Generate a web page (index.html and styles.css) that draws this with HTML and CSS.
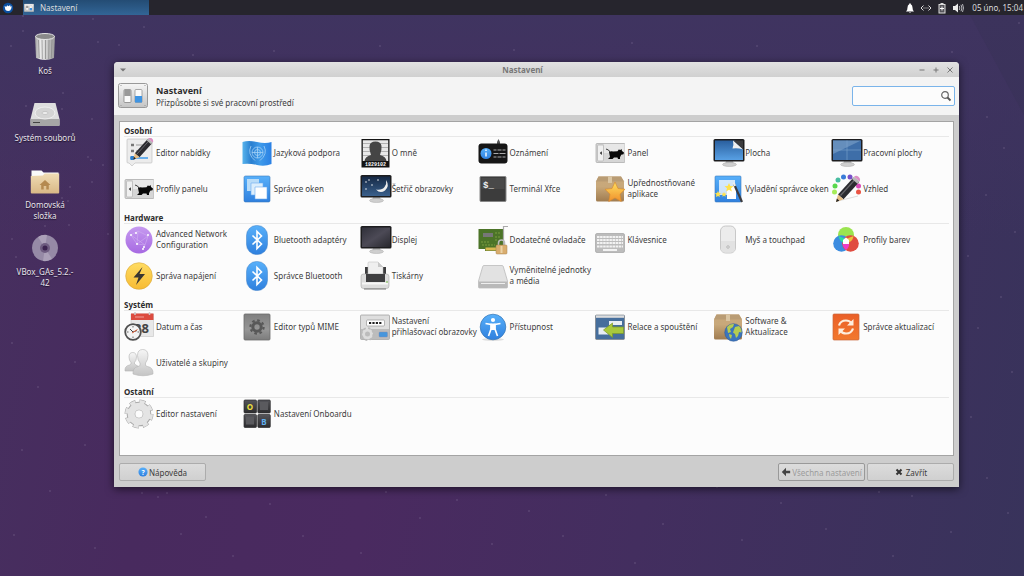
FILE: index.html
```
<!DOCTYPE html>
<html lang="cs">
<head>
    <meta charset="UTF-8">
    <meta name="viewport" content="width=device-width, initial-scale=1">
    <title>Nastavení</title>
    <link rel="stylesheet" href="styles.css">
</head>
<body>
    <!-- shared gradients and symbols -->
    <svg class="defs" width="0" height="0" aria-hidden="true">
        <defs>
            <linearGradient id="blue" x2="0" y2="1"><stop stop-color="#58b0fa"/><stop offset="1" stop-color="#2f80de"/></linearGradient>
            <linearGradient id="flag"><stop stop-color="#58b4ec"/><stop offset=".3" stop-color="#2a7fd0"/><stop offset=".6" stop-color="#3f9bea"/><stop offset="1" stop-color="#2a80e4"/></linearGradient>
            <linearGradient id="silver" x2="0" y2="1"><stop stop-color="#f6f6f6"/><stop offset="1" stop-color="#c4c4c4"/></linearGradient>
            <linearGradient id="metal"><stop stop-color="#a0a0a0"/><stop offset=".3" stop-color="#f0f0f0"/><stop offset=".6" stop-color="#cacaca"/><stop offset="1" stop-color="#989898"/></linearGradient>
            <linearGradient id="dark" x2="0" y2="1"><stop stop-color="#55555a"/><stop offset="1" stop-color="#2c2c2e"/></linearGradient>
            <linearGradient id="gray" x2="0" y2="1"><stop stop-color="#808080"/><stop offset=".6" stop-color="#969696"/><stop offset="1" stop-color="#7c7c7c"/></linearGradient>
            <linearGradient id="screen" x2="1" y2="1"><stop stop-color="#30303a"/><stop offset=".5" stop-color="#4c4a56"/><stop offset="1" stop-color="#28282e"/></linearGradient>
            <linearGradient id="sky" x2="0" y2="1"><stop stop-color="#2a5f9e"/><stop offset="1" stop-color="#58a0e4"/></linearGradient>
            <linearGradient id="night" x2="0" y2="1"><stop stop-color="#152844"/><stop offset="1" stop-color="#3a608c"/></linearGradient>
            <linearGradient id="box" x2="0" y2="1"><stop stop-color="#c9a97c"/><stop offset=".4" stop-color="#c8a87a"/><stop offset="1" stop-color="#a07c50"/></linearGradient>
            <linearGradient id="star" x2="0" y2="1"><stop stop-color="#ffe060"/><stop offset="1" stop-color="#f0902c"/></linearGradient>
            <linearGradient id="yellow" x2="0" y2="1"><stop stop-color="#ffdc62"/><stop offset="1" stop-color="#f7bb33"/></linearGradient>
            <linearGradient id="violet" x2="0" y2="1"><stop stop-color="#c69af0"/><stop offset="1" stop-color="#a76ae2"/></linearGradient>
            <linearGradient id="orange" x2="0" y2="1"><stop stop-color="#ea5f28"/><stop offset="1" stop-color="#f2792e"/></linearGradient>
            <linearGradient id="folder" x2="0" y2="1"><stop stop-color="#f0dcb4"/><stop offset="1" stop-color="#d9b886"/></linearGradient>
            <symbol id="stand" viewBox="0 0 32 30">
                <path d="M13 23h7l1 3h-9z" fill="#bdbdbd"/><ellipse cx="16.500" cy="26.500" rx="7" ry="2" fill="#cfcfcf" stroke="#a0a0a0" stroke-width=".4"/>
                <rect x=".5" y="1" width="31" height="22.500" rx="1.500" fill="#1d1d1f"/>
            </symbol>
            <symbol id="panel" viewBox="0 0 30 30">
                <rect x="1" y="5.500" width="29" height="19" rx="1" fill="#d6d6d6" stroke="#a8a8a8" stroke-width=".7"/>
                <path d="M9 6h20.500v9H9z" fill="#e7e7e7"/>
                <rect x="2.500" y="7" width="6" height="16" rx="1" fill="#f0f0f0" stroke="#aaa" stroke-width=".6"/>
                <path d="M6.800 13.300v3.600L4.800 15.100z" fill="#222"/>
                <path d="M11 11q3 .5 4 3" fill="none" stroke="#111" stroke-width=".8"/>
                <path d="M14 14q2-1 4-.5l4.500-.2 1.500-2 1 1 1.500-1.300.5 2 2 1.500-.5 1.800-2.300.4-1.200 2.500V21h-2l-.5-1.500H19L17.500 21H13l2-2z" fill="#080808"/>
            </symbol>
            <symbol id="bt" viewBox="0 0 30 30">
                <rect x="4.500" y=".5" width="21" height="29" rx="10" fill="url(#blue)" stroke="#3c7fc4" stroke-width=".5"/>
                <path d="M10.500 10.500l9 8.500-4.500 4.500V6.500l4.500 4.500-9 8.500" fill="none" stroke="#fff" stroke-width="1.600"/>
            </symbol>
            <symbol id="carton" viewBox="0 0 30 30">
                <path d="M3.500 2.500h22.500l3 5v18.500a1.500 1.500 0 0 1-1.500 1.500h-25A1.500 1.500 0 0 1 1 26V7.500z" fill="url(#box)"/>
                <path d="M3.500 2.500h22.500l3 5H1z" fill="#b99c74"/><path d="M13 2.500h4v6.500h-4z" fill="#dac5a2"/>
            </symbol>
            <symbol id="switches" viewBox="0 0 30 26">
                <rect x=".5" y=".5" width="29" height="24" rx="2" fill="url(#silver)" stroke="#999"/>
                <path d="M2.500 2.500h1M26.500 2.500h1M2.500 22.500h1M26.500 22.500h1" stroke="#999"/>
                <rect x="6" y="6.500" width="7" height="13" rx="1" fill="#fafafa" stroke="#777" stroke-width=".7"/><path d="M6.300 7h6.400v6H6.300z" fill="#999"/>
                <rect x="17" y="6.500" width="7" height="13" rx="1" fill="#fafafa" stroke="#888" stroke-width=".7"/><path d="M17 13h7v6.500h-7z" fill="#3f94e2"/>
            </symbol>
            <symbol id="pencil" viewBox="0 0 30 30">
                <path d="M7 19.500L22.500 2.500l5.500 4.800-15.500 17z" fill="#2c2c30"/><path d="M9.500 20.500L24.500 4" stroke="#66666a" stroke-width="1.200"/>
                <path d="M7 19.500L5 27l7.500-2.700z" fill="#e6bd82"/><path d="M5.900 23.600L5 27l3.400-1.300z" fill="#222"/>
                <path d="M21 4l2-2.200L28.500 6.600l-2 2.200z" fill="#b8b8b8"/><path d="M23 1.800q2-2 4.200-.2 2.900 2.400 1.300 5z" fill="#dc90c4"/>
            </symbol>
        </defs>
    </svg>

    <header class="taskbar">
        <button class="menu" type="button" aria-label="Nabídka">
            <svg viewBox="0 0 12 12"><circle cx="6" cy="6" r="5.200" fill="#0a4fa0"/><path d="M2.500 4.200l2 .6.600-1.600 1.400 1 2-1.500-.6 1.800 1.800-.2-.4 2.200q-.8 2.600-3 2.600-3.300 0-3.300-3z" fill="#fff"/></svg>
        </button>
        <button class="task" type="button"><svg viewBox="0 0 30 26"><use href="#switches"/></svg>Nastavení</button>
        <div class="tray">
            <svg viewBox="0 0 12 12"><path d="M2 9.500q1.500-1 1.500-4Q3.500 3 5.200 2.200q0-1 .8-1t.8 1Q8.500 3 8.500 5.500q0 3 1.500 4zM5 10h2q-1 1.500-2 0z" fill="#fff"/></svg>
            <svg viewBox="0 0 12 12"><path d="M3.500 3.500L1 6l2.500 2.500M8.500 3.500L11 6 8.500 8.500M3.500 6h1M5.500 6h1M7.500 6h1" fill="none" stroke="#ddd"/></svg>
            <svg viewBox="0 0 12 12"><path d="M4.500 1h3v1H9.500v9.500h-7V2h2z" fill="#ddd"/><path d="M3.500 3h5v7.500h-5z" fill="#55545a"/><path d="M6 4.500v4M4 6.500h4" stroke="#fff"/></svg>
            <svg viewBox="0 0 12 12"><path d="M1 4h2l3-2.500v9L3 8H1z" fill="#eee"/><path d="M7.300 4q1 2 0 4M9 2.800q1.800 3.200 0 6.400M10.500 2q2 4 0 8" fill="none" stroke="#c4c4c8" stroke-width=".9"/></svg>
        </div>
        <time class="clock">05 úno, 15:04</time>
    </header>

    <main class="desktop">
        <svg class="stars" viewBox="0 0 1024 561" preserveAspectRatio="none" aria-hidden="true">
            <path class="beam" d="M970 0h54v100z"/>
            <path class="star" d="M23 1h0M93 4h0M23 16h0M144 12h0M11 31h0M98 27h0M119 30h0M63 78h0M26 91h0M62 94h0M92 104h0M88 142h0M91 145h0M103 150h0M92 167h0M70 172h0M68 186h0M62 183h0M12 224h0M45 211h0M69 210h0M108 219h0M16 242h0M12 328h0M75 347h0M38 372h0M22 435h0M85 430h0M50 476h0M14 520h0M95 533h0M142 478h0M158 482h0M167 478h0M181 519h0M206 502h0M233 541h0M270 489h0M303 521h0M386 477h0M361 538h0M420 503h0M457 485h0M492 529h0M529 496h0M563 521h0M606 480h0M635 548h0M663 509h0M717 472h0M742 525h0M781 488h0M826 514h0M879 477h0M912 481h0M893 541h0M951 517h0M1008 498h0M987 463h0M971 402h0M1012 357h0M978 313h0M1001 282h0M968 241h0M1015 217h0M986 180h0M1004 133h0M987 102h0M1019 8h0M952 37h0M757 31h0M632 28h0M514 35h0M380 31h0M274 36h0M193 40h0"/>
        </svg>

        <nav class="shortcuts" aria-label="Plocha">
            <a href="#kos"><svg viewBox="0 0 30 30"><path d="M5 4h20l-1 22q-9 4-18 0z" fill="url(#metal)"/><path d="M8.500 8l.7 18M12 8l.3 19M15.500 8v19M19 8l-.3 19M22 8l-.7 18" stroke="#8c8c8c" stroke-width=".8"/><ellipse cx="15" cy="4.500" rx="9.500" ry="3" fill="#8a8a8a" stroke="#e4e4e4"/></svg><span>Koš</span></a>
            <a href="#soubory"><svg viewBox="0 0 30 30"><path d="M4.500 4h21l4 16v6q0 1-1 1h-27q-1 0-1-1v-6z" fill="#dedede"/><path d="M.5 20h29v6q0 1-1 1h-27q-1 0-1-1z" fill="#a6a6a6"/><path d="M3 23.500h7" stroke="#444"/><ellipse cx="15" cy="14" rx="10" ry="6" fill="#d4d4d4" stroke="#efefef"/><ellipse cx="15" cy="14" rx="3" ry="1.500" fill="#eee" stroke="#aaa" stroke-width=".5"/></svg><span>Systém souborů</span></a>
            <a href="#domu"><svg viewBox="0 0 30 30"><path d="M1.500 4.500h10l2 2h15v5h-27z" fill="#fafafa"/><path d="M.8 10l12-.5 2-2h14.400v19q0 1-1 1H1.800q-1 0-1-1z" fill="url(#folder)"/><path d="M15 14l5.500 5h-1.700v4.500h-2.500V20h-2.600v3.500h-2.500V19H9.500z" fill="#b58a50"/></svg><span>Domovská<br>složka</span></a>
            <a href="#vbox"><svg viewBox="0 0 30 30"><circle cx="15" cy="15" r="13" fill="#968aa6"/><path d="M15 15L8 4a13 13 0 0 1 9-2zM15 15l7 11a13 13 0 0 1-9 2z" fill="#aba0b8"/><circle cx="15" cy="15" r="5" fill="#6e5c80"/><circle cx="15" cy="15" r="2.500" fill="#3c2450"/></svg><span>VBox_GAs_5.2.-<br>42</span></a>
        </nav>

        <section class="window" aria-label="Nastavení">
            <div class="titlebar">
                <button type="button" aria-label="Nabídka okna"><svg viewBox="0 0 8 8"><path d="M1 2.500h6L4 5.500z" fill="#777"/></svg></button>
                <h1>Nastavení</h1>
                <button type="button" aria-label="Minimalizovat"><svg viewBox="0 0 8 8"><path d="M1.500 4h5"/></svg></button>
                <button type="button" aria-label="Maximalizovat"><svg viewBox="0 0 8 8"><path d="M1.500 4h5M4 1.500v5"/></svg></button>
                <button type="button" aria-label="Zavřít okno"><svg viewBox="0 0 8 8"><path d="M1.500 1.500l5 5M6.500 1.500l-5 5"/></svg></button>
            </div>
            <div class="heading">
                <svg class="app-icon" viewBox="0 0 30 26"><use href="#switches"/></svg>
                <div class="heading-text">
                    <h2>Nastavení</h2>
                    <p>Přizpůsobte si své pracovní prostředí</p>
                </div>
                <div class="search">
                    <input type="search" aria-label="Hledat">
                    <svg viewBox="0 0 12 12"><circle cx="5" cy="5" r="3.300" fill="none" stroke="#666" stroke-width="1.200"/><path d="M7.500 7.500l3 3" stroke="#555" stroke-width="1.800"/></svg>
                </div>
            </div>
            <div class="content">
                <div class="list">
                    <section class="group">
                        <h3>Osobní</h3>
                        <div class="items">
                            <a href="#"><svg viewBox="0 0 30 30"><path d="M4 1h23q1 0 1 1v22q0 1-1 1H11l-3 3-3-3H4q-1 0-1-1V2q0-1 1-1z" fill="#ececec" stroke="#bbb" stroke-width=".6"/><path d="M7 7h3M7 13h3" stroke="#777" stroke-width="2.500"/><path d="M12 7h8M12 13h8" stroke="#999"/><path d="M6 20h18" stroke="#3f9bea" stroke-width="1.500"/><path d="M6.500 18h4v4h-4z" fill="#2a80d0"/><use href="#pencil" x="5" y="-1" width="25" height="25"/></svg><span>Editor nabídky</span></a>
                            <a href="#"><svg viewBox="0 0 30 30"><path d="M.5 4q6-2 14.500 0t14.500 0v22q-7 3-14.500 1T.5 26z" fill="url(#flag)"/><g fill="none" stroke="#a6d2f6" stroke-width=".8"><circle cx="15.500" cy="14.500" r="5.500"/><circle cx="15.500" cy="14.500" r="3"/><path d="M15.500 9v11M10 14.500h11M9 8q-4 8 4 14.500M22 8q4 8-4 14.500"/></g></svg><span>Jazyková podpora</span></a>
                            <a href="#"><svg viewBox="0 0 30 30"><path d="M1.500 1h28v28.500h-28z" fill="#141414"/><path d="M2.800 2.300h25.400V23H2.800z" fill="#e8e8e8"/><path d="M3 5.500h25M3 9.500h25M3 13.500h25M3 17.500h25" stroke="#999" stroke-width=".7"/><path d="M11 17q-2-5-1.500-9Q10 3.500 15.500 3.500T21.500 8q.5 4-1.500 9 6 1.500 6.500 6h-22q.5-4.500 6.500-6z" fill="#454545"/><text class="mugshot" x="15.500" y="28">1829102</text></svg><span>O mně</span></a>
                            <a href="#"><svg viewBox="0 0 30 30"><path d="M19 6V4l1.500-3L22 4v2z" fill="#555"/><rect x=".5" y="5.500" width="29" height="20" rx="3" fill="#161616"/><circle cx="8" cy="15.500" r="5.500" fill="url(#blue)"/><path d="M8 14.500v4M8 11.500v1.500" stroke="#fff" stroke-width="1.400"/><path d="M15.500 12h3m1 0h4m1 0h3M15.500 15.500h5m1 0h6M15.500 19h3m1 0h4m1 0h3" stroke="#aaa"/></svg><span>Oznámení</span></a>
                            <a href="#"><svg viewBox="0 0 30 30"><use href="#panel"/></svg><span>Panel</span></a>
                            <a href="#"><svg class="wide" viewBox="0 0 32 30"><use href="#stand"/><path d="M2 2.500h20l8 9v10.500H2z" fill="url(#sky)"/><path d="M20 2.500h10v9z" fill="#3c3c3e"/><path d="M20 2.500q1 5-.5 8 5-1 10.500 1z" fill="#f0f0f0"/></svg><span>Plocha</span></a>
                            <a href="#"><svg class="wide" viewBox="0 0 32 30"><use href="#stand"/><path d="M2 2.500h28V22H2z" fill="#3e6ea8"/><path d="M2 2.500h28L2 16z" fill="#658ebc"/><path d="M16 2.500V22M2 12h28" stroke="#7da4cc" stroke-width=".6"/></svg><span>Pracovní plochy</span></a>
                            <a href="#"><svg viewBox="0 0 30 30"><use href="#panel"/></svg><span>Profily panelu</span></a>
                            <a href="#"><svg viewBox="0 0 30 30"><rect x="2" y="2" width="26" height="26" rx="1.500" fill="url(#blue)" stroke="#3a78bc" stroke-width=".6"/><path d="M5 5h12v12H5z" fill="#b9dcf8"/><path d="M9 9h12v12H9z" fill="#dceefc" stroke="#6cacf0" stroke-width=".6"/><path d="M13 13h12v12H13z" fill="#fff" stroke="#6cacf0" stroke-width=".6"/></svg><span>Správce oken</span></a>
                            <a href="#"><svg class="wide" viewBox="0 0 32 30"><use href="#stand"/><path d="M2 2.500h28V22H2z" fill="url(#night)"/><path d="M26 6q4 6-1 10.500-5 3.500-9-1 6 1 8.500-2.500T26 6z" fill="#eee"/><path d="M6 8h0M9 6h0M12 11h0M18 6h0M6 15h0" stroke="#fff" stroke-linecap="round" stroke-width="1.500"/></svg><span>Šetřič obrazovky</span></a>
                            <a href="#"><svg viewBox="0 0 30 30"><rect x="2" y="2.500" width="26" height="25" rx="1" fill="#3c3c3c" stroke="#888"/><path d="M3.500 4h23v11h-23z" fill="#494949"/><text class="prompt" x="5" y="14">$_</text></svg><span>Terminál Xfce</span></a>
                            <a href="#"><svg viewBox="0 0 30 30"><use href="#carton"/><path d="M20 8l3 6.500 7 .8-5 4.900 1.300 7.300L20 24l-6.300 3.500L15 20.200l-5-4.900 7-.8z" fill="url(#star)" stroke="#d8882a" stroke-width=".6"/></svg><span>Upřednostňované<br>aplikace</span></a>
                            <a href="#"><svg viewBox="0 0 30 30"><rect x="2" y="2" width="26" height="26" rx="1" fill="url(#blue)" stroke="#3a78bc" stroke-width=".6"/><path d="M6 6h16v15H6z" fill="#fff" opacity=".75"/><path d="M14 12h9v13h-9z" fill="#fff"/><path d="M16 9l1.300 3 3.200.3-2.500 2 .8 3.200-2.800-1.700-2.800 1.700.8-3.200-2.500-2 3.200-.3zM5 17l1 2 2 .2-1.500 1.500.3 2.200L5 22l-2 1 .4-2.300L2 19.200l2-.2zM11 18l.8 1.500 1.700.2-1.200 1.200.3 1.800-1.600-.9-1.600.9.300-1.800-1.200-1.200 1.700-.2z" fill="#ffe14a"/><path d="M21 10l8 18" stroke="#3c3c40" stroke-width="2.200"/><path d="M20.500 8.500l1.500 3.500" stroke="#eee" stroke-width="2.200"/></svg><span>Vyladění správce oken</span></a>
                            <a href="#"><svg viewBox="0 0 30 30"><g stroke-width="5" stroke-linecap="round"><path d="M3.500 18h0" stroke="#a6ec58"/><path d="M4 12h0" stroke="#58d84c"/><path d="M7 6h0" stroke="#48bca0"/><path d="M12.500 3h0" stroke="#3a7cd8"/><path d="M19 3h0" stroke="#7850c8"/><path d="M27.500 12h0" stroke="#d84cb8"/><path d="M27.500 18h0" stroke="#ea5444"/></g><path d="M7 27l20-5" stroke="#ddd"/><use href="#pencil" y="1"/></svg><span>Vzhled</span></a>
                        </div>
                    </section>
                    <section class="group">
                        <h3>Hardware</h3>
                        <div class="items">
                            <a href="#"><svg viewBox="0 0 30 30"><circle cx="15" cy="15" r="13.500" fill="url(#violet)"/><path d="M7 10l7-4 10 5-3 9-8-1zM7 10l14 10M14 6l-1 13 11-8M19 24l2-4" fill="none" stroke="#d0aef0" stroke-width=".6"/><path d="M7 10h0M24 10h0M13 19h0M19 24h0M20 22h0M12 8h0" stroke="#fff" stroke-width="2" stroke-linecap="round"/></svg><span>Advanced Network<br>Configuration</span></a>
                            <a href="#"><svg viewBox="0 0 30 30"><use href="#bt"/></svg><span>Bluetooth adaptéry</span></a>
                            <a href="#"><svg class="wide" viewBox="0 0 32 30"><use href="#stand"/><path d="M2 2.500h28V22H2z" fill="url(#screen)"/></svg><span>Displej</span></a>
                            <a href="#"><svg viewBox="0 0 30 30"><path d="M.5 4h25v20H18v2H7v-2H.5z" fill="#4c7428"/><path d="M7.500 22.500h11v3h-11z" fill="#d8b850"/><path d="M5 8h10v4H5z" fill="#777"/><path d="M3 17h9M4 20h13M17 8h5M17 12h5M17 15h3" stroke="#88a846" stroke-width=".8" stroke-dasharray="2 1"/><path d="M25.500 26V1.500H30" fill="none" stroke="#aaa" stroke-width="1.200"/><path d="M20.500 21v-3q0-3 3-3t3 3v3" fill="none" stroke="#bbb" stroke-width="1.600"/><rect x="18" y="20" width="11" height="9" rx="1" fill="#d9ad6e" stroke="#a88450" stroke-width=".5"/><path d="M22.500 21h2v7h-2z" fill="#ecd4a8"/></svg><span>Dodatečné ovladače</span></a>
                            <a href="#"><svg viewBox="0 0 30 30"><rect x=".5" y="8.500" width="29" height="19" rx="1.500" fill="#bcbcbc" stroke="#999" stroke-width=".6"/><path d="M2 12h26M2 15h26M2 18h26M2 21.500h26" stroke="#f2f2f2" stroke-width="2.200" stroke-dasharray="2.500 .6"/><path d="M8 25h14" stroke="#f2f2f2" stroke-width="2"/></svg><span>Klávesnice</span></a>
                            <a href="#"><svg viewBox="0 0 30 30"><rect x="7.500" y="1" width="15" height="27" rx="5" fill="#ececec" stroke="#bdbdbd" stroke-width=".8"/><path d="M8 16h14v7q0 4.500-5 4.500h-4q-5 0-5-4.500z" fill="#e2e2e2"/><circle cx="15" cy="22" r="1.300" fill="none" stroke="#aaa" stroke-width=".7"/></svg><span>Myš a touchpad</span></a>
                            <a href="#"><svg viewBox="0 0 30 30"><circle cx="15" cy="10" r="8" fill="#9be450"/><circle cx="10.500" cy="18.500" r="8.300" fill="#3c8ce0"/><circle cx="19.500" cy="18.500" r="8.300" fill="#e04c40"/><path d="M7.500 11l7.500 3-3 3.500Q8.500 16 7.500 11z" fill="#2cdc9c"/><path d="M22.500 11l-7.500 3 3 3.500q4-2 4.500-6.500z" fill="#ecc43c"/><path d="M12 18h6q.8 4-3 7-3.800-3-3-7z" fill="#ee3cc8"/><path d="M15 12.500l3 2.500v4h-6v-4z" fill="#fff"/></svg><span>Profily barev</span></a>
                            <a href="#"><svg viewBox="0 0 30 30"><circle cx="15" cy="15" r="13.300" fill="url(#yellow)" stroke="#d8a83a" stroke-width=".6"/><path d="M18.500 6L9.500 16.500h5L12 24l9-11h-5.500z" fill="#3a3632"/></svg><span>Správa napájení</span></a>
                            <a href="#"><svg viewBox="0 0 30 30"><use href="#bt"/></svg><span>Správce Bluetooth</span></a>
                            <a href="#"><svg viewBox="0 0 30 30"><path d="M5 6h21v9H5z" fill="#3c3c3e"/><path d="M8 15V2q0-1 1-1h9l5 5v9z" fill="#efefef" stroke="#bbb" stroke-width=".5"/><path d="M18 1v5h5z" fill="#c8c8c8"/><rect x="1" y="13" width="28" height="14.500" rx="2.500" fill="#dcdcdc" stroke="#aaa" stroke-width=".6"/><path d="M6 13h19v8H6z" fill="#3e3e40"/><path d="M2 22.500h26" stroke="#f6f6f6" stroke-width="2"/><path d="M4 28h22" stroke="#777"/><path d="M26 21h2" stroke="#7ac04c"/></svg><span>Tiskárny</span></a>
                            <a href="#"><svg viewBox="0 0 30 30"><path d="M6 4.500h18q1 0 1.300 1L29.500 20v6q0 1-1 1h-27q-1 0-1-1v-6L4.700 5.500Q5 4.500 6 4.500z" fill="#e2e2e2" stroke="#aaa" stroke-width=".6"/><path d="M.7 20.500h28.600V26q0 1-1 1h-26.600q-1 0-1-1z" fill="#b9b9b9"/><path d="M3 22.500h24" stroke="#eee"/></svg><span>Vyměnitelné jednotky<br>a média</span></a>
                        </div>
                    </section>
                    <section class="group">
                        <h3>Systém</h3>
                        <div class="items">
                            <a href="#"><svg viewBox="0 0 30 30"><path d="M7 2h22.500v22.500H7z" fill="#e8e8e8" stroke="#bbb" stroke-width=".5"/><path d="M7 1.500h22.500V8H7z" fill="#dc4c40"/><path d="M11 0v3M25.500 0v3" stroke="#ccc" stroke-width="1.500"/><path d="M11 5h9" stroke="#f0a098"/><text class="date" x="10" y="21">38</text><circle cx="9" cy="20" r="7.800" fill="#f4f4f4" stroke="#505050" stroke-width="1.800"/><path d="M9 14v1.500M9 24.500V26M3 20h1.500M13.500 20H15" stroke="#666"/><path d="M6 17l3 3 4-1.500" fill="none" stroke="#444"/><path d="M8 21l5.500-3.500" stroke="#e4643c"/></svg><span>Datum a čas</span></a>
                            <a href="#"><svg viewBox="0 0 30 30"><rect x="2" y="2" width="26" height="26" rx="1" fill="url(#gray)" stroke="#6c6c6c" stroke-width=".8"/><circle cx="15" cy="15" r="4.200" fill="none" stroke="#585858" stroke-width="3"/><circle cx="15" cy="15" r="6.600" fill="none" stroke="#585858" stroke-width="2.200" stroke-dasharray="2.600 2.580"/></svg><span>Editor typů MIME</span></a>
                            <a href="#"><svg viewBox="0 0 30 30"><rect x=".5" y="3" width="29" height="24.500" rx="1" fill="#dedede" stroke="#999" stroke-width=".7"/><path d="M1 17h28v10H1z" fill="#bcbcbc"/><rect x="6.500" y="8" width="18" height="6" rx="1" fill="#fff" stroke="#999" stroke-width=".7"/><path d="M9 11h13" stroke="#222" stroke-width="2.200" stroke-dasharray="2.200 1.200"/><rect x="19" y="20" width="8.500" height="5" rx="1" fill="#4696dc" stroke="#88a" stroke-width=".4"/><circle cx="7.500" cy="22" r="4" fill="none" stroke="#ddd" stroke-width="3"/><circle cx="7.500" cy="22" r="6" fill="none" stroke="#bbb" stroke-width="1.800" stroke-dasharray="2.300 2.400"/></svg><span>Nastavení<br>přihlašovací obrazovky</span></a>
                            <a href="#"><svg viewBox="0 0 30 30"><ellipse cx="15" cy="27.500" rx="11" ry="1.500" fill="#ddd"/><circle cx="15" cy="15" r="12.800" fill="url(#blue)" stroke="#3474b4" stroke-width=".7"/><circle cx="15" cy="8" r="2.100" fill="#fff"/><path d="M7.500 11.500l5.500 1v4.500l-2.500 7M22.500 11.500l-5.500 1v4.500l2.500 7" fill="none" stroke="#fff" stroke-width="1.600"/><path d="M12.500 11.500h5v6.500h-5z" fill="#fff"/></svg><span>Přístupnost</span></a>
                            <a href="#"><svg viewBox="0 0 30 30"><rect x=".5" y="3" width="29" height="24.500" rx="1" fill="#466e9c" stroke="#777" stroke-width=".6"/><path d="M1 3.300h28v2.500H1z" fill="#ddd"/><path d="M14 9h13v4H14zM3.500 15.500h10v7h-10z" fill="#e8eef4"/><path d="M8.500 18l9-7v4h11v6.500h-11v4z" fill="#a8c83c" stroke="#7c9a28" stroke-width=".7"/></svg><span>Relace a spouštění</span></a>
                            <a href="#"><svg viewBox="0 0 30 30"><use href="#carton"/><circle cx="20.500" cy="20.500" r="8.800" fill="#3c74bc" stroke="#2c5894" stroke-width=".5"/><path d="M14 15q3-3.500 7-3l-1 3-3 2 1 3-3 1zM22 15l4-1q3 3 2.500 6.500L26 20l-1 4-2 2-1-4-2-1.500zM16 22l3 1-1 4q-2-2-2-5z" fill="#b4cc50"/></svg><span>Software &amp;<br>Aktualizace</span></a>
                            <a href="#"><svg viewBox="0 0 30 30"><rect x="2" y="2" width="26" height="26" rx="1" fill="url(#orange)" stroke="#c8683c" stroke-width=".7"/><path d="M8 13.500q1.500-5 7-5 3.500 0 5.500 2.500M22 16.500q-1.500 5-7 5-3.500 0-5.500-2.500" fill="none" stroke="#fdeede" stroke-width="2.200"/><path d="M22.500 7v6.500H16zM7.500 23v-6.500H14z" fill="#fdeede"/></svg><span>Správce aktualizací</span></a>
                            <a href="#"><svg viewBox="0 0 30 30"><g fill="url(#silver)" stroke="#b4b4b4" stroke-width=".6"><path d="M1 23q-.5-5 4.500-6l1.500-1v-1.500Q5 12.500 5 9q0-4.500 3.700-4.500T12.500 9q0 3.500-2 5.500V16l1.500 1q4 1 4 6z"/><path d="M9 26q-.5-6.500 5-7.500l2-1V15q-2.500-3-2.500-7.500 0-6 5.200-6t5.300 6q0 4.500-2.500 7.500v2.500l2 1q6 1 5.500 7.500-10 3.500-20 0z"/></g></svg><span>Uživatelé a skupiny</span></a>
                        </div>
                    </section>
                    <section class="group">
                        <h3>Ostatní</h3>
                        <div class="items">
                            <a href="#"><svg viewBox="0 0 30 30"><circle cx="15" cy="15" r="12.500" fill="none" stroke="#a8a8a8" stroke-width="4" stroke-dasharray="6 3.820"/><circle cx="15" cy="15" r="8" fill="none" stroke="#a8a8a8" stroke-width="8.600"/><circle cx="15" cy="15" r="12" fill="none" stroke="#e4e4e4" stroke-width="4" stroke-dasharray="5 4.420" stroke-dashoffset="-.3"/><circle cx="15" cy="15" r="7.800" fill="none" stroke="#e4e4e4" stroke-width="7"/></svg><span>Editor nastavení</span></a>
                            <a href="#"><svg viewBox="0 0 30 30"><g fill="url(#dark)" stroke="#2c2c2e" stroke-width=".7"><rect x="2" y="1" width="12.500" height="13" rx="1"/><rect x="15.800" y="1" width="12.500" height="13" rx="1"/><rect x="2" y="15.500" width="12.500" height="13" rx="1"/><rect x="15.800" y="15.500" width="12.500" height="13" rx="1"/></g><path d="M18 3h8v8h-8zM4 17.500h8v8H4z" fill="#5a5a5e"/><text class="key yellow" x="8" y="11">O</text><text class="key blue" x="22" y="25.500">B</text></svg><span>Nastavení Onboardu</span></a>
                        </div>
                    </section>
                </div>
                <div class="actions">
                    <button class="help" type="button"><svg viewBox="0 0 12 12"><circle cx="6" cy="6" r="5.500" fill="url(#blue)"/><text class="question" x="6" y="9">?</text></svg>Nápověda</button>
                    <button type="button" disabled><svg viewBox="0 0 12 12"><path d="M1 6l5-5v3.500h5v3H6V11z" fill="#444"/></svg>Všechna nastavení</button>
                    <button class="close" type="button"><svg viewBox="0 0 12 12"><path d="M3 3l6 6M9 3L3 9" stroke="#333" stroke-width="2.400"/></svg>Zavřít</button>
                </div>
            </div>
        </section>
    </main>
</body>
</html>
```

FILE: styles.css
```
* {
    box-sizing: border-box;
    margin: 0;
    padding: 0;
}
html, body {
    height: 100%;
}
body {
    display: flex;
    flex-direction: column;
    font-family: "Noto Sans", sans-serif;
    font-size: 8px;
    line-height: 11px;
    color: #3c3c3c;
    background: #443060;
    overflow: hidden;
}
a {
    color: inherit;
    text-decoration: none;
}
button, input {
    font: inherit;
    color: inherit;
    border: 0;
    background: none;
}
svg {
    display: block;
    flex: none;
}
.defs {
    position: absolute;
}

/* top panel */
.taskbar {
    display: flex;
    align-items: center;
    height: 15px;
    flex: none;
    background: #26252d;
    color: #dcdcdc;
}
.menu {
    padding: 0 9px 0 2px;
}
.menu svg {
    width: 12px;
    height: 12px;
}
.task {
    display: flex;
    align-items: center;
    gap: 6px;
    width: 126px;
    height: 15px;
    padding-left: 1px;
    background: linear-gradient(#244c74, #326596);
}
.task svg {
    width: 10px;
    height: 10px;
}
.tray {
    display: flex;
    gap: 4px;
    margin-left: auto;
}
.tray svg {
    width: 12px;
    height: 12px;
}
.clock {
    padding: 0 1px 0 8px;
}

/* desktop */
.desktop {
    position: relative;
    flex: 1;
    min-height: 0;
    background: linear-gradient(100deg, #46305f 0%, #482a5e 20%, #4a2a60 40%, #432e5f 65%, #38335b 100%);
}
.desktop::before {
    content: "";
    position: absolute;
    inset: 0;
    background: linear-gradient(#3f3460, rgba(63, 52, 96, 0) 40%);
}
.stars {
    position: absolute;
    width: 100%;
    height: 100%;
}
.star {
    fill: none;
    stroke: #86749c;
    stroke-width: 1.5;
    stroke-linecap: round;
    opacity: .6;
}
.beam {
    fill: #342e50;
    opacity: .25;
}
.shortcuts {
    position: relative;
    width: 90px;
    padding-top: 17px;
    color: #e8e4ec;
    text-align: center;
    text-shadow: 0 1px 1px #1c1028;
}
.shortcuts a {
    display: flex;
    flex-direction: column;
    align-items: center;
    gap: 3px;
    min-height: 67px;
}
.shortcuts svg {
    width: 30px;
    height: 30px;
}

/* settings window */
.window {
    position: absolute;
    top: 47px;
    right: 65px;
    bottom: 89px;
    left: 114px;
    display: flex;
    flex-direction: column;
    background: #cdcdcd;
    border-radius: 4px 4px 0 0;
    box-shadow: 0 2px 8px rgba(0, 0, 0, .6);
    overflow: hidden;
}
.titlebar {
    display: flex;
    align-items: center;
    gap: 6px;
    height: 15px;
    flex: none;
    padding: 0 5px;
    background: linear-gradient(#e2e2e2, #d0d0d0);
}
.titlebar h1 {
    flex: 1;
    font-size: 8px;
    text-align: center;
    color: #777;
}
.titlebar svg {
    width: 8px;
    height: 8px;
    stroke: #777;
}
.titlebar path[fill] {
    stroke: none;
}
.heading {
    display: flex;
    align-items: center;
    gap: 8px;
    height: 38px;
    flex: none;
    padding: 0 4px;
    background: #f4f4f4;
}
.app-icon {
    width: 30px;
    height: 26px;
}
.heading-text {
    flex: 1;
}
.heading h2 {
    font-size: 9px;
    line-height: 12px;
    color: #2c2c2c;
}
.search {
    position: relative;
}
.search input {
    display: block;
    width: 103px;
    height: 20px;
    padding: 0 18px 0 4px;
    border: 1px solid #7ab4ea;
    border-radius: 2px;
    background: #fcfcfc;
    outline: none;
}
.search svg {
    position: absolute;
    top: 4px;
    right: 3px;
    width: 12px;
    height: 12px;
}
.content {
    display: flex;
    flex: 1;
    flex-direction: column;
    gap: 7px;
    min-height: 0;
    padding: 6px 5px;
}
.list {
    display: flex;
    flex: 1;
    flex-direction: column;
    gap: 6px;
    min-height: 0;
    padding: 2px 4px;
    border: 1px solid #a4a4a4;
    background: #fcfcfc;
    overflow: auto;
}
.group h3 {
    height: 13px;
    border-bottom: 1px solid #e8e8e8;
    font-size: 8px;
    line-height: 13px;
    color: #2c2c2c;
}
.items {
    display: grid;
    grid-template-columns: repeat(7, 1fr);
    row-gap: 4px;
}
.items a {
    display: flex;
    align-items: center;
    gap: 2px;
    min-width: 0;
    height: 32px;
}
.items svg {
    width: 30px;
    height: 30px;
}
.items .wide {
    width: 32px;
    margin-right: -2px;
}
.items span {
    padding-bottom: 2px;
    white-space: nowrap;
}
.actions {
    display: flex;
    gap: 2px;
}
.actions button {
    display: flex;
    align-items: center;
    justify-content: center;
    gap: 1px;
    width: 87px;
    height: 18px;
    border: 1px solid #acacac;
    border-radius: 2px;
    background: linear-gradient(#dcdcdc, #d0d0d0);
}
.actions .help {
    margin-right: auto;
}
.actions .close {
    gap: 2px;
}
.actions button:disabled {
    border-color: #999;
    color: #9c9c9c;
}
.actions svg {
    width: 10px;
    height: 10px;
}

/* lettering inside icons */
svg text {
    font-weight: bold;
}
.mugshot {
    font: bold 5px "Liberation Mono", monospace;
    fill: #fff;
    text-anchor: middle;
}
.prompt {
    font: bold 9px "Liberation Mono", monospace;
    fill: #f0f0f0;
}
.date {
    font-size: 13px;
    fill: #444;
}
.key {
    font-size: 8px;
    text-anchor: middle;
}
.key.yellow {
    fill: #f0e040;
}
.key.blue {
    fill: #60b0f0;
}
.question {
    font-size: 8px;
    fill: #fff;
    text-anchor: middle;
}
```
